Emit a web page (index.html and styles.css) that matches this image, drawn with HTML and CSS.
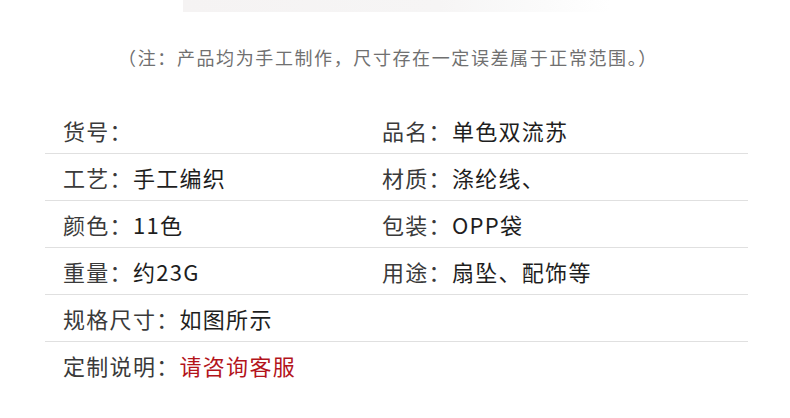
FILE: index.html
```html
<!DOCTYPE html>
<html lang="zh-CN">
<head>
<meta charset="utf-8">
<link rel="stylesheet" href="styles.css">
</head>
<body>
<div class="top-photo"></div>
<p class="note">（注：产品均为手工制作，尺寸存在一定误差属于正常范围。）</p>
<div class="specs">
  <div class="row">
    <div class="cell">货号：</div>
    <div class="cell">品名：<span class="val">单色双流苏</span></div>
  </div>
  <div class="row">
    <div class="cell">工艺：<span class="val">手工编织</span></div>
    <div class="cell">材质：<span class="val">涤纶线、</span></div>
  </div>
  <div class="row">
    <div class="cell">颜色：<span class="val">11色</span></div>
    <div class="cell">包装：<span class="val">OPP袋</span></div>
  </div>
  <div class="row">
    <div class="cell">重量：<span class="val">约23G</span></div>
    <div class="cell">用途：<span class="val">扇坠、配饰等</span></div>
  </div>
  <div class="row">
    <div class="cell">规格尺寸：<span class="val">如图所示</span></div>
    <div class="cell"></div>
  </div>
  <div class="row last">
    <div class="cell">定制说明：<span class="val red">请咨询客服</span></div>
    <div class="cell"></div>
  </div>
</div>
</body>
</html>
```
FILE: styles.css
```css
html, body {
  margin: 0;
  padding: 0;
  background: #fff;
}
body {
  width: 790px;
  height: 418px;
  overflow: hidden;
  font-family: "Noto Sans CJK SC", "Noto Sans", sans-serif;
}
.top-photo {
  margin-left: 183px;
  width: 427px;
  height: 12px;
  background: linear-gradient(90deg, #f5f3f3 0%, #f6f5f5 60%, #fbfbfb 85%, #ffffff 100%);
}
.note {
  margin: 33px 0 0 0;
  height: 24px;
  line-height: 24px;
  font-size: 18px;
  letter-spacing: 1.6px;
  color: #707070;
  text-align: center;
  font-weight: 400;
  padding-right: 14px;
}
.specs {
  margin: 38px 0 0 45px;
  width: 703px;
}
.row {
  display: grid;
  grid-template-columns: 319px 1fr;
  height: 46px;
  border-bottom: 1px solid #e0e0e0;
  align-items: center;
}
.row.last {
  border-bottom: none;
}
.cell {
  padding-left: 18px;
  font-size: 22px;
  letter-spacing: 1.3px;
  color: #3a3a3a;
  line-height: 30px;
  white-space: nowrap;
}
.val {
  color: #1e1e1e;
}
.val.red {
  color: #b3141b;
}
```
